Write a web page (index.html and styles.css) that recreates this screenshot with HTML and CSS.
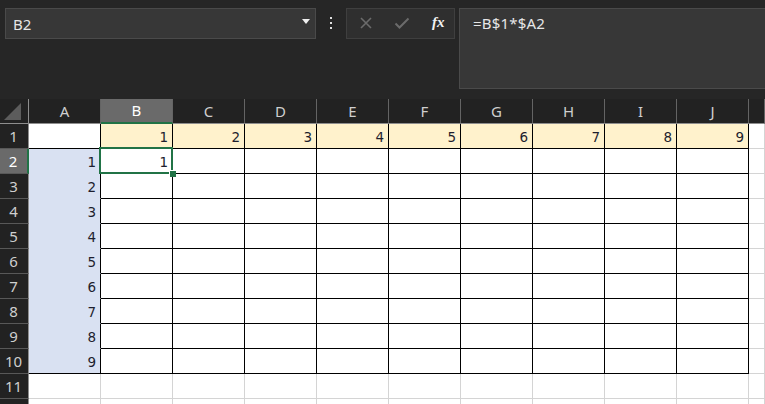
FILE: index.html
```html
<!DOCTYPE html>
<html>
<head>
<meta charset="utf-8">
<link rel="stylesheet" href="styles.css">
</head>
<body>
<div class="app">
  <div class="toolbar">
    <div class="namebox">
      <span class="name">B2</span>
      <span class="caret"></span>
    </div>
    <div class="dots"><span></span><span></span><span></span></div>
    <div class="icons">
      <svg class="ico" width="14" height="14" viewBox="0 0 14 14"><path d="M2 2 L12 12 M12 2 L2 12" stroke="#6b6b6b" stroke-width="1.6" fill="none"/></svg>
      <svg class="ico" width="16" height="14" viewBox="0 0 16 14"><path d="M1.5 7.5 L5.5 11.5 L14.5 2.5" stroke="#6b6b6b" stroke-width="2" fill="none"/></svg>
      <span class="fx">fx</span>
    </div>
    <div class="formula">=B$1*$A2</div>
  </div>
  <div class="sheet">
    <div class="hd corner"><span class="tri"></span></div>
    <div class="hd">A</div><div class="hd sel">B</div><div class="hd">C</div><div class="hd">D</div><div class="hd">E</div><div class="hd">F</div><div class="hd">G</div><div class="hd">H</div><div class="hd">I</div><div class="hd">J</div><div class="hd"></div>

    <div class="rh">1</div>
    <div class="c a1"></div><div class="c b y">1</div><div class="c b y">2</div><div class="c b y">3</div><div class="c b y">4</div><div class="c b y">5</div><div class="c b y">6</div><div class="c b y">7</div><div class="c b y">8</div><div class="c b y">9</div><div class="c"></div>

    <div class="rh sel">2</div>
    <div class="c blue">1</div><div class="c b active">1<span class="handle"></span></div><div class="c b"></div><div class="c b"></div><div class="c b"></div><div class="c b"></div><div class="c b"></div><div class="c b"></div><div class="c b"></div><div class="c b"></div><div class="c"></div>

    <div class="rh">3</div>
    <div class="c blue">2</div><div class="c b"></div><div class="c b"></div><div class="c b"></div><div class="c b"></div><div class="c b"></div><div class="c b"></div><div class="c b"></div><div class="c b"></div><div class="c b"></div><div class="c"></div>

    <div class="rh">4</div>
    <div class="c blue">3</div><div class="c b"></div><div class="c b"></div><div class="c b"></div><div class="c b"></div><div class="c b"></div><div class="c b"></div><div class="c b"></div><div class="c b"></div><div class="c b"></div><div class="c"></div>

    <div class="rh">5</div>
    <div class="c blue">4</div><div class="c b"></div><div class="c b"></div><div class="c b"></div><div class="c b"></div><div class="c b"></div><div class="c b"></div><div class="c b"></div><div class="c b"></div><div class="c b"></div><div class="c"></div>

    <div class="rh">6</div>
    <div class="c blue">5</div><div class="c b"></div><div class="c b"></div><div class="c b"></div><div class="c b"></div><div class="c b"></div><div class="c b"></div><div class="c b"></div><div class="c b"></div><div class="c b"></div><div class="c"></div>

    <div class="rh">7</div>
    <div class="c blue">6</div><div class="c b"></div><div class="c b"></div><div class="c b"></div><div class="c b"></div><div class="c b"></div><div class="c b"></div><div class="c b"></div><div class="c b"></div><div class="c b"></div><div class="c"></div>

    <div class="rh">8</div>
    <div class="c blue">7</div><div class="c b"></div><div class="c b"></div><div class="c b"></div><div class="c b"></div><div class="c b"></div><div class="c b"></div><div class="c b"></div><div class="c b"></div><div class="c b"></div><div class="c"></div>

    <div class="rh">9</div>
    <div class="c blue">8</div><div class="c b"></div><div class="c b"></div><div class="c b"></div><div class="c b"></div><div class="c b"></div><div class="c b"></div><div class="c b"></div><div class="c b"></div><div class="c b"></div><div class="c"></div>

    <div class="rh">10</div>
    <div class="c blue last">9</div><div class="c b"></div><div class="c b"></div><div class="c b"></div><div class="c b"></div><div class="c b"></div><div class="c b"></div><div class="c b"></div><div class="c b"></div><div class="c b"></div><div class="c"></div>

    <div class="rh">11</div>
    <div class="c"></div><div class="c"></div><div class="c"></div><div class="c"></div><div class="c"></div><div class="c"></div><div class="c"></div><div class="c"></div><div class="c"></div><div class="c"></div><div class="c"></div>

    <div class="rh"></div>
    <div class="c"></div><div class="c"></div><div class="c"></div><div class="c"></div><div class="c"></div><div class="c"></div><div class="c"></div><div class="c"></div><div class="c"></div><div class="c"></div><div class="c"></div>
  </div>
</div>
</body>
</html>
```

FILE: styles.css
```css
html, body {
  margin: 0;
  padding: 0;
  background: #262626;
  overflow: hidden;
}
.app {
  width: 765px;
  height: 404px;
  overflow: hidden;
  font-family: "Noto Sans", "Open Sans", sans-serif;
}
.toolbar {
  height: 99px;
  box-sizing: border-box;
  padding: 8px 0 0 5px;
  display: flex;
  align-items: flex-start;
}
.namebox {
  width: 311px;
  height: 31px;
  box-sizing: border-box;
  border: 1px solid #4a4a4a;
  background: #373737;
  display: flex;
  align-items: center;
  justify-content: space-between;
  padding: 0 5px 0 7px;
}
.name {
  color: #e6e6e6;
  font-size: 15px;
  line-height: 1;
  margin-top: 2px;
}
.caret {
  width: 0;
  height: 0;
  border-left: 4px solid transparent;
  border-right: 4px solid transparent;
  border-top: 5px solid #f0f0f0;
  margin-top: -4px;
}
.dots {
  width: 30px;
  height: 31px;
  display: flex;
  flex-direction: column;
  align-items: center;
  justify-content: center;
  gap: 3px;
  padding-bottom: 2px;
  box-sizing: border-box;
}
.dots span {
  width: 2px;
  height: 2px;
  background: #e0e0e0;
}
.icons {
  width: 109px;
  height: 31px;
  box-sizing: border-box;
  border: 1px solid #3f3f3f;
  background: #2f2f2f;
  display: flex;
  align-items: center;
  padding-left: 12px;
  gap: 21px;
}
.ico {
  display: block;
  margin-top: -2px;
}
.fx {
  font-family: "Liberation Serif", "DejaVu Serif", serif;
  font-style: italic;
  font-weight: bold;
  font-size: 15px;
  color: #f2f2f2;
  margin-top: -3px;
  margin-left: 1px;
}
.formula {
  margin-left: 4px;
  flex: 1;
  height: 81px;
  box-sizing: border-box;
  border: 1px solid #4a4a4a;
  border-right: none;
  background: #373737;
  color: #e6e6e6;
  font-size: 15px;
  padding: 4px 0 0 13px;
  letter-spacing: 0.2px;
}
.sheet {
  display: grid;
  grid-template-columns: 29px repeat(10, 72px) 1fr;
  grid-auto-rows: 25px;
}
.sheet > div {
  box-sizing: border-box;
}
.hd {
  background: #222222;
  border-right: 1px solid #646464;
  border-bottom: 1px solid #8e8e8e;
  color: #cfcfcf;
  font-size: 15px;
  display: flex;
  align-items: center;
  justify-content: center;
  padding-bottom: 1px;
}
.hd.sel {
  background: #6a6a6a;
  color: #ffffff;
  border-bottom: 2px solid #217346;
}
.corner {
  position: relative;
  border-right: 1px solid #8e8e8e;
}
.tri {
  width: 0;
  height: 0;
  border-left: 17px solid transparent;
  border-bottom: 17px solid #5c5c5c;
  margin: 1px 0 0 -4px;
}
.rh {
  background: #222222;
  border-right: 1px solid #8e8e8e;
  border-bottom: 1px solid #585858;
  color: #cfcfcf;
  font-size: 15px;
  display: flex;
  align-items: center;
  justify-content: center;
  padding-right: 1px;
}
.rh.sel {
  background: #6a6a6a;
  color: #ffffff;
  border-right: 2px solid #217346;
}
.c {
  background: #ffffff;
  border-right: 1px solid #d4d4d4;
  border-bottom: 1px solid #d4d4d4;
  font-family: "DejaVu Sans", sans-serif;
  font-size: 13.5px;
  color: #1e1e2e;
  display: flex;
  align-items: center;
  justify-content: flex-end;
  padding: 2px 4px 0 0;
}
.c.b {
  border-right-color: #000000;
  border-bottom-color: #000000;
}
.c.y {
  background: #fff2cc;
}
.c.a1 {
  border-right-color: #000000;
  border-bottom-color: #000000;
}
.c.blue {
  background: #d9e1f2;
  border-right-color: #000000;
  border-bottom-color: #d9e1f2;
}
.c.blue.last {
  border-bottom-color: #000000;
}
.c.active {
  position: relative;
}
.c.active::after {
  content: "";
  position: absolute;
  left: -2px;
  top: -2px;
  right: -1px;
  bottom: -1px;
  border: 2px solid #217346;
}
.handle {
  position: absolute;
  right: -4px;
  bottom: -4px;
  width: 6px;
  height: 6px;
  background: #217346;
  border-left: 1px solid #fff;
  border-top: 1px solid #fff;
  z-index: 2;
}
```
